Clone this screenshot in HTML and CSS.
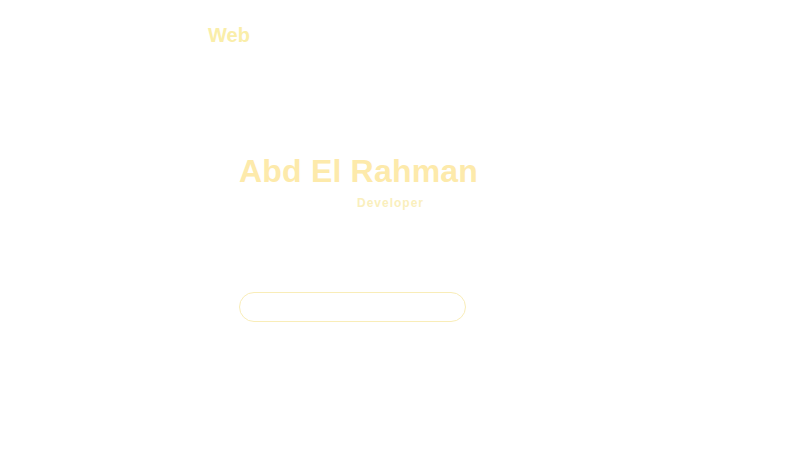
FILE: index.html
```html
<!DOCTYPE html>
<html lang="en">
<head>
<meta charset="utf-8">
<title>Abd El Rahman</title>
<link rel="stylesheet" href="styles.css">
</head>
<body>
<header class="top">
  <span class="brand">Web</span>
</header>
<main class="hero">
  <h1 class="name">Abd El Rahman</h1>
  <p class="role">Developer</p>
  <button class="cta" type="button"></button>
</main>
</body>
</html>
```
FILE: styles.css
```css
html, body {
  margin: 0;
  padding: 0;
  background: #ffffff;
  font-family: "Liberation Sans", Arial, sans-serif;
}
.top {
  padding: 23px 0 0 208px;
  height: 24px;
}
.brand {
  display: block;
  font-size: 20px;
  line-height: 24px;
  font-weight: 700;
  color: #faeea9;
}
.hero {
  display: flex;
  flex-direction: column;
  align-items: flex-start;
  padding: 105px 0 0 239px;
}
.name {
  margin: 0;
  font-size: 32px;
  line-height: 38px;
  font-weight: 700;
  letter-spacing: 0.2px;
  color: #fdeaab;
}
.role {
  margin: 6px 0 0 118px;
  font-size: 12px;
  line-height: 14px;
  font-weight: 700;
  letter-spacing: 1px;
  color: #faefbd;
}
.cta {
  margin-top: 82px;
  width: 227px;
  height: 30px;
  border: 1px solid #f9edb8;
  border-radius: 15px;
  background: transparent;
  padding: 0;
}
```
